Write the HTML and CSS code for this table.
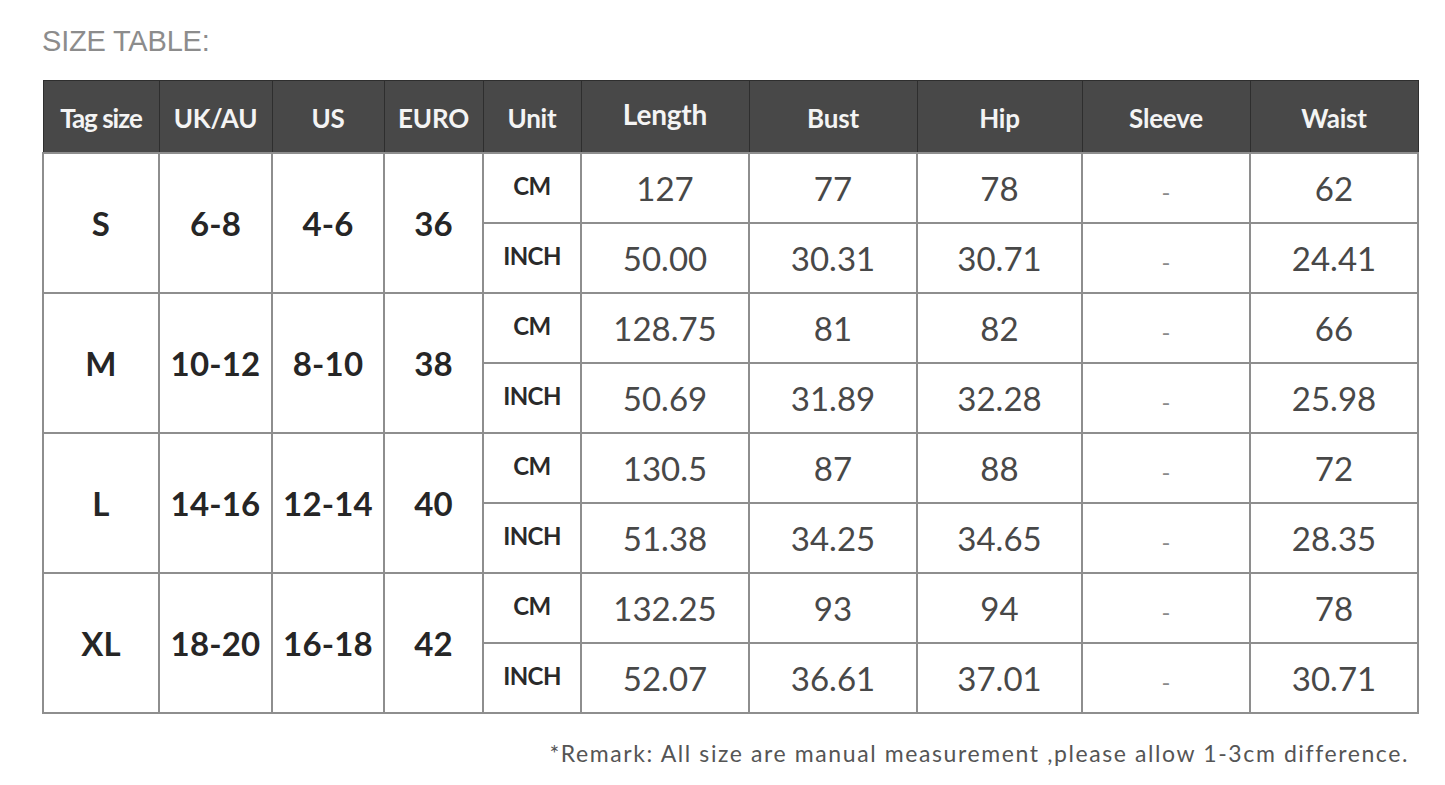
FILE: index.html
```html
<!DOCTYPE html>
<html lang="en">
<head>
<meta charset="utf-8">
<title>Size Table</title>
<link rel="stylesheet" href="styles.css">
</head>
<body>
<main class="page">
  <h1 class="title">SIZE TABLE:</h1>
  <table class="size-table">
    <colgroup>
      <col class="c-tag"><col class="c-uk"><col class="c-us"><col class="c-euro"><col class="c-unit">
      <col class="c-len"><col class="c-bust"><col class="c-hip"><col class="c-sleeve"><col class="c-waist">
    </colgroup>
    <thead>
      <tr>
        <th class="th-tag">Tag size</th><th>UK/AU</th><th>US</th><th>EURO</th><th>Unit</th>
        <th class="th-len">Length</th><th>Bust</th><th>Hip</th><th>Sleeve</th><th>Waist</th>
      </tr>
    </thead>
    <tbody>
      <tr>
        <td rowspan="2" class="size">S</td><td rowspan="2" class="size">6-8</td><td rowspan="2" class="size">4-6</td><td rowspan="2" class="size">36</td>
        <td class="unit">CM</td><td>127</td><td>77</td><td>78</td><td class="dash">-</td><td>62</td>
      </tr>
      <tr>
        <td class="unit">INCH</td><td>50.00</td><td>30.31</td><td>30.71</td><td class="dash">-</td><td>24.41</td>
      </tr>
      <tr>
        <td rowspan="2" class="size">M</td><td rowspan="2" class="size">10-12</td><td rowspan="2" class="size">8-10</td><td rowspan="2" class="size">38</td>
        <td class="unit">CM</td><td>128.75</td><td>81</td><td>82</td><td class="dash">-</td><td>66</td>
      </tr>
      <tr>
        <td class="unit">INCH</td><td>50.69</td><td>31.89</td><td>32.28</td><td class="dash">-</td><td>25.98</td>
      </tr>
      <tr>
        <td rowspan="2" class="size">L</td><td rowspan="2" class="size">14-16</td><td rowspan="2" class="size">12-14</td><td rowspan="2" class="size">40</td>
        <td class="unit">CM</td><td>130.5</td><td>87</td><td>88</td><td class="dash">-</td><td>72</td>
      </tr>
      <tr>
        <td class="unit">INCH</td><td>51.38</td><td>34.25</td><td>34.65</td><td class="dash">-</td><td>28.35</td>
      </tr>
      <tr>
        <td rowspan="2" class="size">XL</td><td rowspan="2" class="size">18-20</td><td rowspan="2" class="size">16-18</td><td rowspan="2" class="size">42</td>
        <td class="unit">CM</td><td>132.25</td><td>93</td><td>94</td><td class="dash">-</td><td>78</td>
      </tr>
      <tr>
        <td class="unit">INCH</td><td>52.07</td><td>36.61</td><td>37.01</td><td class="dash">-</td><td>30.71</td>
      </tr>
    </tbody>
  </table>
  <p class="remark">*Remark: All size are manual measurement ,please allow 1-3cm difference.</p>
</main>
</body>
</html>
```
FILE: styles.css
```css
html, body {
  margin: 0;
  padding: 0;
  background: #ffffff;
}

.page {
  width: 1375px;
  padding: 24px 0 0 42px;
  font-family: Lato, "Open Sans", sans-serif;
}

.title {
  margin: 0 0 22px 0;
  font-family: "Liberation Sans", Arial, sans-serif;
  font-weight: 400;
  font-size: 29px;
  line-height: 34px;
  color: #8c8c8c;
  letter-spacing: -0.2px;
}

.size-table {
  width: 1375px;
  table-layout: fixed;
  border-collapse: collapse;
}

.c-tag { width: 116px; }
.c-uk { width: 113px; }
.c-us { width: 112px; }
.c-euro { width: 99px; }
.c-unit { width: 98px; }
.c-len { width: 168px; }
.c-bust { width: 168px; }
.c-hip { width: 165px; }
.c-sleeve { width: 168px; }
.c-waist { width: 168px; }

.size-table thead tr {
  height: 72px;
}

.size-table tbody tr {
  height: 70px;
}

.size-table th {
  padding: 3px 0 0 0;
  background: #484848;
  color: #f4f4f4;
  font-weight: 700;
  font-size: 26px;
  line-height: 30px;
  letter-spacing: -0.2px;
  border: 1px solid #2e2e2e;
  text-align: center;
  vertical-align: middle;
}

.size-table th.th-tag {
  font-size: 26px;
  letter-spacing: -1px;
  white-space: nowrap;
}

.size-table th.th-len {
  padding: 0 0 4px 0;
  font-size: 28px;
}

.size-table td {
  padding: 0;
  border: 2px solid #8e8e8e;
  text-align: center;
  vertical-align: middle;
  font-size: 33px;
  line-height: 38px;
  font-weight: 400;
  color: #484848;
}

.size-table td.size {
  font-weight: 700;
  color: #262626;
  font-size: 33px;
  letter-spacing: 0.2px;
}

.size-table td.unit {
  font-weight: 700;
  color: #2a2a2a;
  font-size: 24px;
  letter-spacing: -0.6px;
  padding-bottom: 4px;
}

.size-table td.dash {
  color: #8a8a8a;
  font-size: 24px;
  padding-top: 8px;
}

.remark {
  margin: 25px 8px 0 0;
  text-align: right;
  font-size: 23px;
  line-height: 28px;
  color: #555;
  letter-spacing: 1.6px;
}
```
